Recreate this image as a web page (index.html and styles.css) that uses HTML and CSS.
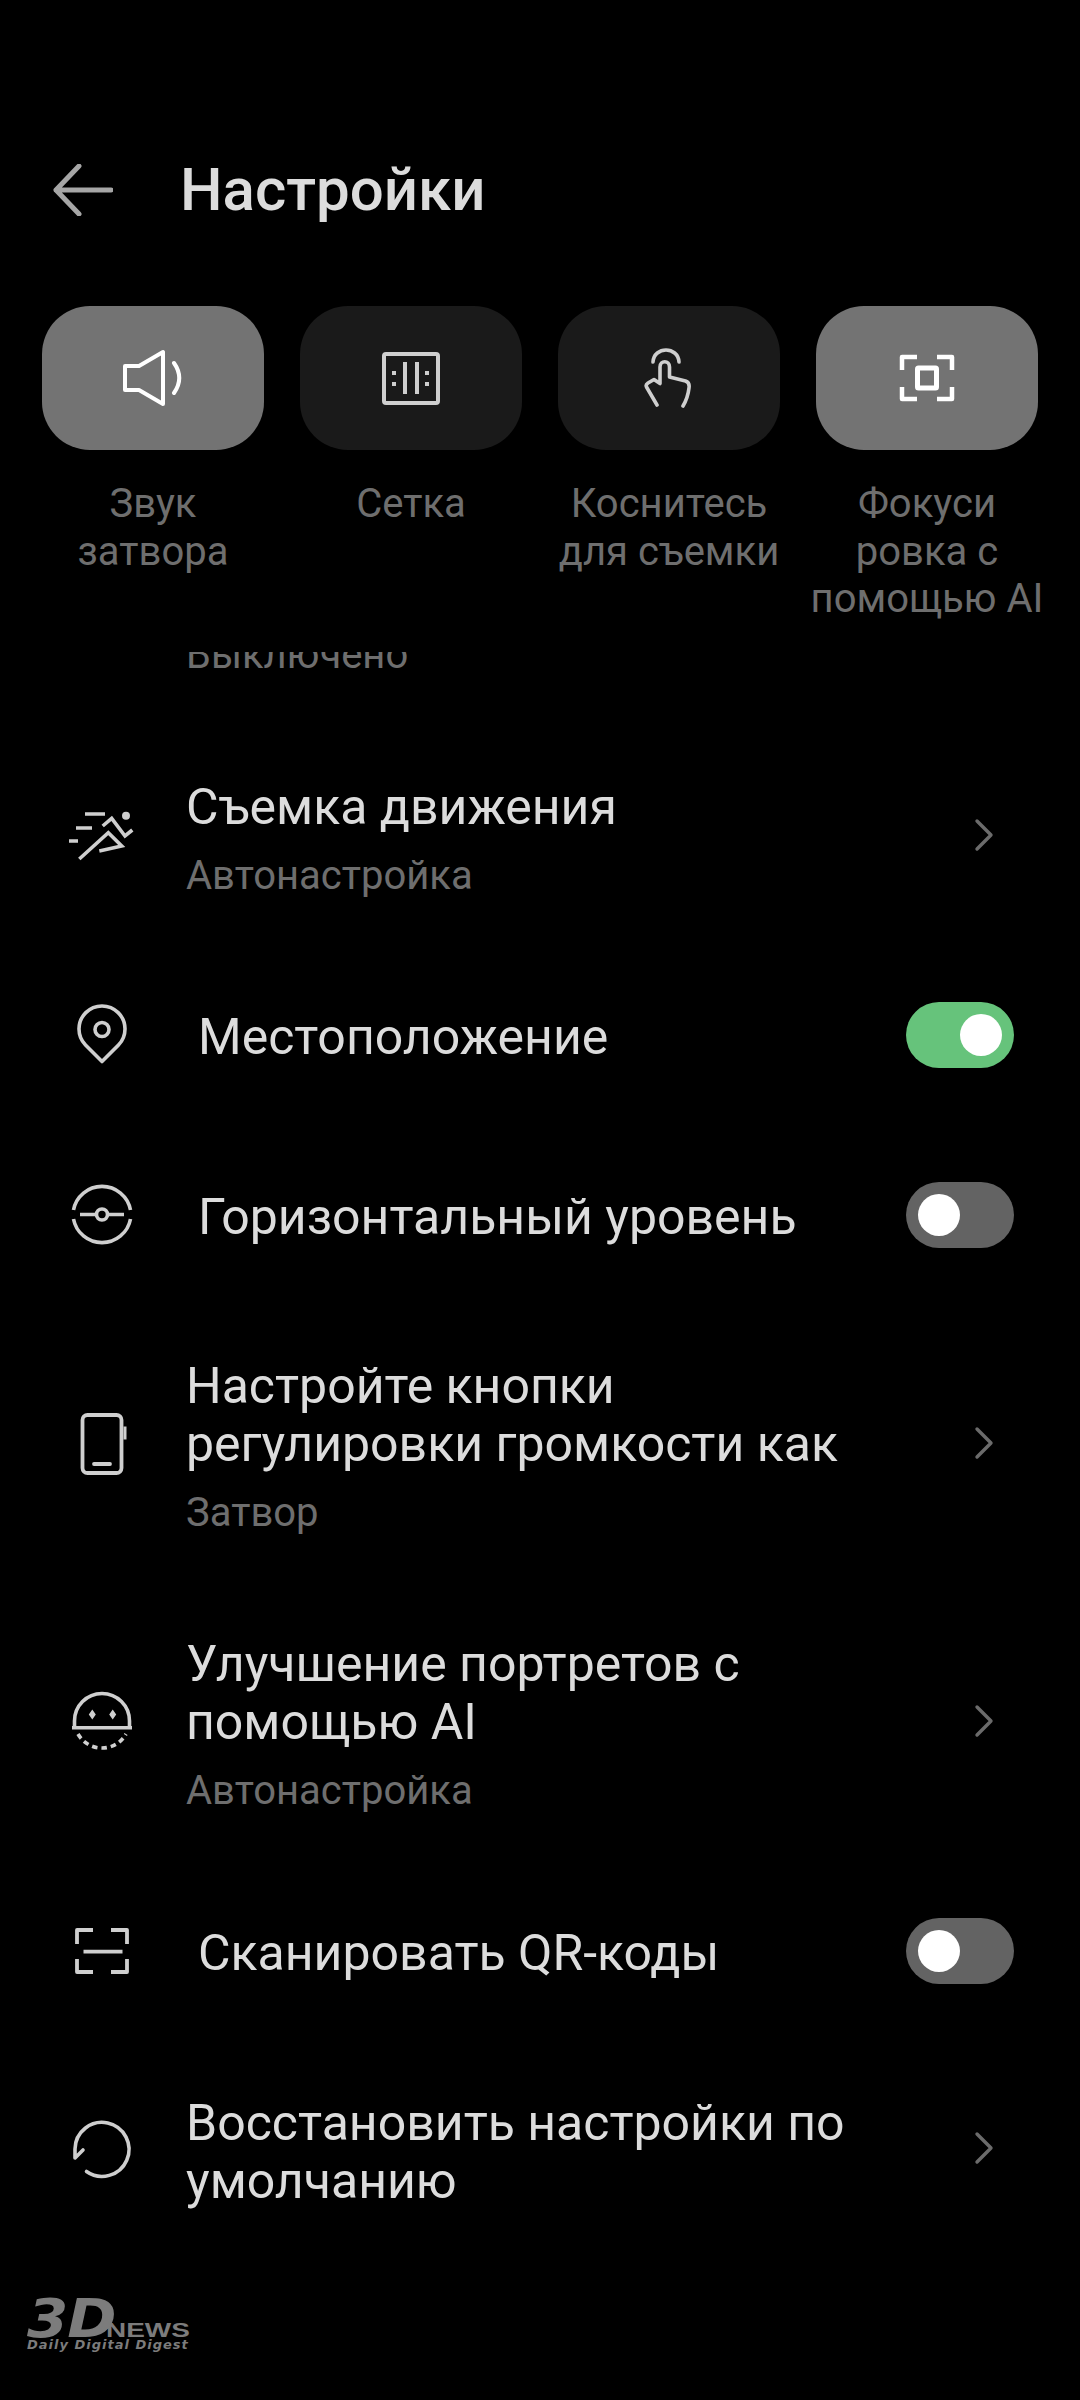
FILE: index.html
```html
<!DOCTYPE html>
<html lang="ru">
<head>
<meta charset="utf-8">
<title>Настройки</title>
<link rel="stylesheet" href="styles.css">
</head>
<body>
<main class="page">
  <header class="header">
    <svg class="back" viewBox="0 0 60 52" fill="none" stroke="#a6a6a6" stroke-width="5" stroke-linecap="round" stroke-linejoin="round"><path d="M58 26H3M26 2L3 26l23 24"/></svg>
    <h1 class="title">Настройки</h1>
  </header>

  <section class="tiles">
    <div class="tile">
      <div class="tile-box on">
        <svg class="tile-icon" viewBox="0 0 60 60" fill="none" stroke="#fff" stroke-width="4"><path d="M2 18h14L40 4v52L16 42H2z" stroke-linejoin="round"/><path d="M51 15c7 10 7 20 0 30" stroke-linecap="round"/></svg>
      </div>
      <div class="tile-label">Звук<br>затвора</div>
    </div>
    <div class="tile">
      <div class="tile-box">
        <svg class="tile-icon" viewBox="0 0 60 60" fill="none" stroke="#cfcfcf" stroke-width="4"><rect x="3" y="6" width="54" height="49" rx="2"/><path d="M24 14v32M36 14v32"/><path d="M13 23v4M13 34v4M46 23v4M46 34v4"/></svg>
      </div>
      <div class="tile-label">Сетка</div>
    </div>
    <div class="tile">
      <div class="tile-box">
        <svg class="tile-icon" viewBox="0 0 60 60" fill="none" stroke="#cfcfcf" stroke-width="3.600" stroke-linecap="round" stroke-linejoin="round"><path d="M18 57L7.500 39c-1-2 0-3 1.500-4l6-3.500 6 4V19c0-7 9.500-7 9.500 0v10l16 4c3 1 4 4 3.500 7-.7 6-3 13-6 18"/><path d="M14 14C15-2 39-2 40 14"/></svg>
      </div>
      <div class="tile-label">Коснитесь<br>для съемки</div>
    </div>
    <div class="tile">
      <div class="tile-box on">
        <svg class="tile-icon" viewBox="0 0 60 60" fill="none" stroke="#fff" stroke-width="4.500"><path d="M20 9H5v13M40 9h15v13M20 51H5V39M40 51h15V39" stroke-linejoin="round"/><rect x="20.500" y="20" width="19" height="20" rx="1" stroke-width="5"/></svg>
      </div>
      <div class="tile-label">Фокуси<br>ровка с<br>помощью AI</div>
    </div>
  </section>

  <section class="list">
    <div class="row row-clipped">
      <div class="row-body"><div class="row-sub">Выключено</div></div>
    </div>

    <div class="row row-two">
      <svg class="row-icon" viewBox="0 0 66 66" fill="none" stroke="#cfcfcf" stroke-width="3.600"><circle cx="58" cy="13.700" r="4" fill="#cfcfcf" stroke="none"/><path d="M17 12h20M8 26h16M1 39h9"/><path d="M34.700 24l9-7.700L57 34l7.300-6"/><path d="M11.300 57l29-26.300L53.700 44l-22.400 5"/></svg>
      <div class="row-body">
        <div class="row-title">Съемка движения</div>
        <div class="row-sub">Автонастройка</div>
      </div>
      <svg class="chevron" viewBox="0 0 20 34" fill="none" stroke="#6b6b6b" stroke-width="3.400" stroke-linecap="round" stroke-linejoin="round"><path d="M3 3l14 14L3 31"/></svg>
    </div>

    <div class="row row-switch row-loc">
      <svg class="row-icon" viewBox="0 0 66 66" fill="none" stroke="#cfcfcf" stroke-width="3.600"><path d="M34 59.500L17.500 43A23 23 0 1 1 50.500 43Z" stroke-linejoin="round"/><circle cx="34" cy="27.500" r="7"/></svg>
      <div class="row-body indented"><div class="row-title">Местоположение</div></div>
      <div class="switch on"><span class="knob"></span></div>
    </div>

    <div class="row row-switch row-level">
      <svg class="row-icon" viewBox="0 0 66 66" fill="none" stroke="#cfcfcf" stroke-width="3.600"><path d="M5.500 28A29 29 0 0 1 62.500 28M5.500 37A29 29 0 0 0 62.500 37"/><circle cx="34" cy="32.500" r="5.500"/><path d="M12 32.500h16.500M39.500 32.500H56"/></svg>
      <div class="row-body indented"><div class="row-title">Горизонтальный уровень</div></div>
      <div class="switch"><span class="knob"></span></div>
    </div>

    <div class="row row-vol">
      <svg class="row-icon" viewBox="0 0 66 66" fill="none" stroke="#cfcfcf" stroke-width="3.800"><rect x="14.500" y="5" width="39" height="58" rx="5"/><path d="M26 54h16" stroke-linecap="round"/><path d="M57 16.500v13" stroke-width="3"/></svg>
      <div class="row-body">
        <div class="row-title">Настройте кнопки<br>регулировки громкости как</div>
        <div class="row-sub">Затвор</div>
      </div>
      <svg class="chevron" viewBox="0 0 20 34" fill="none" stroke="#6b6b6b" stroke-width="3.400" stroke-linecap="round" stroke-linejoin="round"><path d="M3 3l14 14L3 31"/></svg>
    </div>

    <div class="row row-portrait">
      <svg class="row-icon" viewBox="0 0 66 66" fill="none" stroke="#cfcfcf" stroke-width="3.600"><path d="M6.500 40V33A27.500 27.500 0 0 1 61.500 33V40"/><path d="M4 39.700H64"/><path d="M10 46A27.500 27.500 0 0 0 58 46" stroke-dasharray="5.500 4"/><path d="M24.300 21.500l3.500 5-3.500 5-3.500-5zM44.700 21.500l3.500 5-3.500 5-3.500-5z" fill="#cfcfcf" stroke="none"/></svg>
      <div class="row-body">
        <div class="row-title">Улучшение портретов с<br>помощью AI</div>
        <div class="row-sub">Автонастройка</div>
      </div>
      <svg class="chevron" viewBox="0 0 20 34" fill="none" stroke="#6b6b6b" stroke-width="3.400" stroke-linecap="round" stroke-linejoin="round"><path d="M3 3l14 14L3 31"/></svg>
    </div>

    <div class="row row-switch row-qr">
      <svg class="row-icon" viewBox="0 0 66 66" fill="none" stroke="#cfcfcf" stroke-width="3.800"><path d="M25 12H9v14M43 12H59v14M25 54H9V41M43 54H59V41" stroke-linejoin="round"/><path d="M15.500 33.700H54.500"/></svg>
      <div class="row-body indented"><div class="row-title">Сканировать QR-коды</div></div>
      <div class="switch"><span class="knob"></span></div>
    </div>

    <div class="row row-reset">
      <svg class="row-icon" viewBox="0 0 66 66" fill="none" stroke="#cfcfcf" stroke-width="3.600" stroke-linecap="round" stroke-linejoin="round"><path d="M18.500 56.500A27 27 0 1 0 7 34L7 43 15 35"/></svg>
      <div class="row-body">
        <div class="row-title">Восстановить настройки по<br>умолчанию</div>
      </div>
      <svg class="chevron" viewBox="0 0 20 34" fill="none" stroke="#6b6b6b" stroke-width="3.400" stroke-linecap="round" stroke-linejoin="round"><path d="M3 3l14 14L3 31"/></svg>
    </div>
  </section>

  <div class="logo">
    <div class="logo-top"><span class="logo-3d">3D</span><span class="logo-news">NEWS</span></div>
    <div class="logo-tag">Daily Digital Digest</div>
  </div>
</main>
</body>
</html>
```
FILE: styles.css
```css
* { box-sizing: border-box; }
html, body { margin: 0; padding: 0; background: #000; }
body { font-family: Roboto, "Noto Sans", sans-serif; }
.page { position: relative; width: 1080px; height: 2400px; background: #000; overflow: hidden; }

.header { display: flex; align-items: center; height: 82px; margin-top: 149px; padding-left: 53px; }
.back { width: 60px; height: 52px; flex: none; }
.title { margin: 0 0 0 67px; font-size: 60px; line-height: 82px; font-weight: 500; color: #dcdcdc; }

.tiles { display: grid; grid-template-columns: repeat(4, 222px); column-gap: 36px; padding-left: 42px; margin-top: 75px; height: 346px; }
.tile { display: flex; flex-direction: column; align-items: center; }
.tile-box { width: 222px; height: 144px; flex: none; border-radius: 48px; background: #1a1a1a; display: flex; align-items: center; justify-content: center; }
.tile-box.on { background: #737373; }
.tile-icon { width: 60px; height: 60px; }
.tile-label { margin-top: 30px; width: 240px; text-align: center; font-size: 40px; line-height: 47.500px; color: #6e6e6e; white-space: nowrap; }

.list { height: 1650px; overflow: hidden; }
.row { display: flex; align-items: center; padding-left: 68px; }
.row-icon { width: 66px; height: 66px; flex: none; }
.row-body { margin-left: 52px; flex: 1; min-width: 0; }
.row-body.indented { margin-left: 64px; padding-top: 3px; }
.row-title { font-size: 50px; line-height: 58px; color: #dcdcdc; white-space: nowrap; }
.row-sub { font-size: 40px; line-height: 50px; color: #6e6e6e; white-space: nowrap; margin: 15px 0 -10px; }
.chevron { width: 20px; height: 34px; flex: none; margin-right: 86px; }

.row-clipped { height: 28px; align-items: flex-end; padding-left: 186px; }
.row-clipped .row-body { margin-left: 0; }
.row-clipped .row-sub { margin: 0; }
.row-two { margin-top: 98px; }
.row-loc { margin-top: 111px; }
.row-level { margin-top: 114px; }
.row-vol { margin-top: 109px; }
.row-portrait { margin-top: 107px; }
.row-qr { margin-top: 112px; height: 66px; }
.row-reset { margin-top: 110px; }
.row-reset .row-body { margin-bottom: -9px; }

.switch { width: 108px; height: 66px; flex: none; margin-right: 66px; border-radius: 33px; background: #636363; padding: 12px 54px 12px 12px; }
.switch.on { background: #66c37b; padding: 12px 12px 12px 54px; }
.knob { display: block; width: 42px; height: 42px; border-radius: 50%; background: #fff; }

.logo { position: absolute; left: 27px; top: 2298px; color: #7c7c7c; font-family: "DejaVu Sans", sans-serif; font-weight: 700; font-style: italic; }
.logo-top { display: flex; align-items: baseline; height: 40px; }
.logo-3d { font-size: 54px; line-height: 41px; letter-spacing: -1px; transform: scaleX(1.1); transform-origin: left bottom; }
.logo-news { font-family: "Liberation Sans", sans-serif; font-size: 21px; line-height: 17px; font-style: normal; font-weight: 700; margin-left: -1px; transform: scaleX(1.33); transform-origin: left bottom; }
.logo-tag { font-size: 13px; line-height: 14px; letter-spacing: 1px; white-space: nowrap; }
```
